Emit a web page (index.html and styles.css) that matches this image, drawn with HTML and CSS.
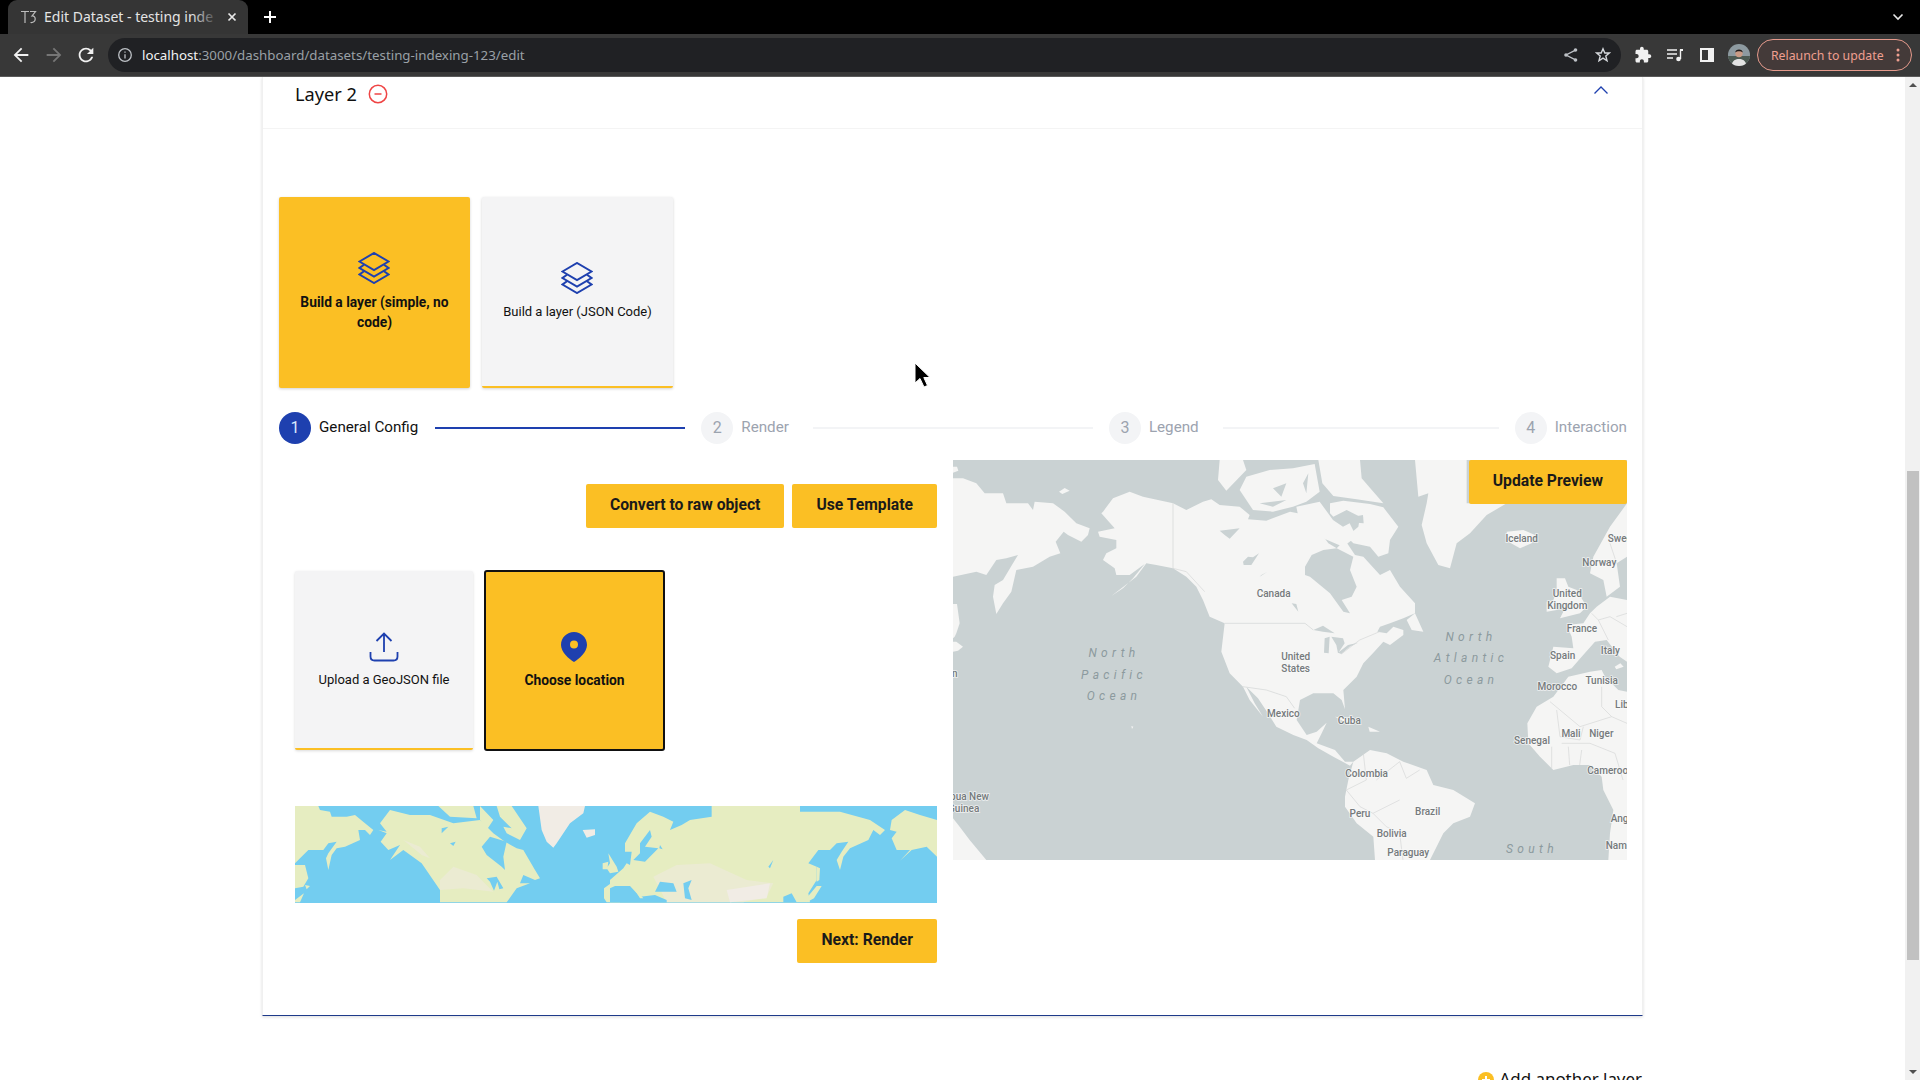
FILE: index.html
```html
<!DOCTYPE html>
<html lang="en">
<head>
<meta charset="utf-8">
<title>Edit Dataset - testing indexing</title>
<link rel="stylesheet" href="styles.css">
</head>
<body>
<header class="chrome">
  <div class="tabstrip">
    <div class="tab">
      <svg class="favicon" viewBox="0 0 17 16"><path d="M1 2.500H9M5 2.500V14M10 2.500H15.500L12 7C16.500 6.500 16.500 14 10.500 13.500"/></svg>
      <span class="tab-title">Edit Dataset - testing inde</span>
      <span class="tab-fade"></span>
      <svg class="tab-close" viewBox="0 0 10 10"><path d="M1.500 1.500L8.500 8.500M8.500 1.500L1.500 8.500"/></svg>
    </div>
    <svg class="newtab" viewBox="0 0 14 14"><path d="M7 1V13M1 7H13"/></svg>
    <svg class="tabmenu" viewBox="0 0 12 8"><path d="M1.500 1.500L6 6L10.500 1.500"/></svg>
  </div>
  <div class="toolbar">
    <svg class="tb-icon" viewBox="0 0 24 24"><path d="M20 11H7.830l5.590-5.590L12 4l-8 8 8 8 1.410-1.410L7.830 13H20v-2z"/></svg>
    <svg class="tb-icon tb-disabled" viewBox="0 0 24 24"><path d="M4 11h12.170l-5.590-5.590L12 4l8 8-8 8-1.410-1.410L16.170 13H4v-2z"/></svg>
    <svg class="tb-icon" viewBox="0 0 24 24"><path d="M17.650 6.350A7.958 7.958 0 0 0 12 4c-4.420 0-7.990 3.580-7.990 8s3.570 8 7.990 8c3.730 0 6.840-2.550 7.730-6h-2.080A5.990 5.990 0 0 1 12 18c-3.310 0-6-2.690-6-6s2.690-6 6-6c1.660 0 3.140.690 4.220 1.780L13 11h7V4l-2.350 2.350z"/></svg>
    <div class="omnibox">
      <svg class="info" viewBox="0 0 16 16"><circle cx="8" cy="8" r="6.300"/><path d="M8 7.200V11.500M8 4.500V5.800"/></svg>
      <span class="url"><span class="url-host">localhost</span>:3000/dashboard/datasets/testing-indexing-123/edit</span>
      <svg class="omni-icon share" viewBox="0 0 16 16"><circle cx="12.500" cy="3" r="1.800"/><circle cx="3" cy="8" r="1.800"/><circle cx="12.500" cy="13" r="1.800"/><path class="share-line" d="M12 3.300L3 8L12 12.700"/></svg>
      <svg class="omni-icon star" viewBox="0 0 16 16"><path d="M8 1.800L9.800 6H14.400L10.800 9L12 13.800L8 11.200L4 13.800L5.200 9L1.600 6H6.200Z"/></svg>
    </div>
    <svg class="ext-icon puzzle" viewBox="0 0 24 24"><path d="M20.500 11H19V7c0-1.100-.9-2-2-2h-4V3.500C13 2.120 11.880 1 10.500 1S8 2.120 8 3.500V5H4c-1.100 0-1.990.9-1.990 2v3.800H3.500c1.490 0 2.700 1.210 2.700 2.700s-1.210 2.700-2.700 2.700H2V20c0 1.100.9 2 2 2h3.800v-1.500c0-1.490 1.210-2.700 2.700-2.700 1.490 0 2.700 1.210 2.700 2.700V22H17c1.100 0 2-.9 2-2v-4h1.500c1.380 0 2.500-1.120 2.500-2.500S21.880 11 20.500 11z"/></svg>
    <svg class="ext-icon media" viewBox="0 0 16 14"><path class="media-line" d="M0 2H10M0 6H10M0 10H6M13.500 1.500V11"/><path class="media-flag" d="M13 1H16V3H13Z"/><circle cx="11.500" cy="11" r="2.300"/></svg>
    <svg class="ext-icon panel-ic" viewBox="0 0 14 14"><path d="M0 0H14V14H0ZM2 2V12H8V2Z"/></svg>
    <svg class="avatar" viewBox="0 0 22 22">
      <defs><clipPath id="av"><circle cx="11" cy="11" r="11"/></clipPath></defs>
      <g clip-path="url(#av)">
        <rect class="av-sky" width="22" height="22"/>
        <rect class="av-ground" y="12" width="22" height="10"/>
        <circle class="av-face" cx="11" cy="9.500" r="3.700"/>
        <path class="av-hair" d="M7.300 8.500C7 4.500 15 4.500 14.700 8.500C13 6.800 9 6.800 7.300 8.500Z"/>
        <path class="av-shirt" d="M3.500 22C4 16 8 15 11 15S18 16 18.500 22Z"/>
      </g>
    </svg>
    <div class="relaunch">
      <span class="relaunch-text">Relaunch to update</span>
      <svg class="relaunch-dots" viewBox="0 0 4 14"><circle cx="2" cy="2" r="1.500"/><circle cx="2" cy="7" r="1.500"/><circle cx="2" cy="12" r="1.500"/></svg>
    </div>
  </div>
</header>

<div class="viewport">
  <main class="page">
    <section class="panel">
      <div class="panel-head">
        <span class="layer-name">Layer 2</span>
        <svg class="remove" viewBox="0 0 20 20"><circle cx="10" cy="10" r="8.700"/><path d="M6.500 10H13.500"/></svg>
        <svg class="collapse" viewBox="0 0 14 8"><path d="M.5 7.500L7 1L13.500 7.500"/></svg>
      </div>
      <div class="panel-body">
        <div class="choice-row">
          <div class="choice choice-on">
            <svg class="layers" viewBox="0 0 32 32"><path d="M1.500 9.500L16 1L30.500 9.500L16 18Z"/><path d="M6 12.700L1.500 16L16 24.500L30.500 16L26 12.700"/><path d="M6 19.200L1.500 22.500L16 31L30.500 22.500L26 19.200"/></svg>
            <span>Build a layer (simple, no code)</span>
          </div>
          <div class="choice choice-off">
            <svg class="layers" viewBox="0 0 32 32"><path d="M1.500 9.500L16 1L30.500 9.500L16 18Z"/><path d="M6 12.700L1.500 16L16 24.500L30.500 16L26 12.700"/><path d="M6 19.200L1.500 22.500L16 31L30.500 22.500L26 19.200"/></svg>
            <span>Build a layer (JSON Code)</span>
          </div>
        </div>

        <ol class="stepper">
          <li class="step step-active"><span class="num">1</span><span class="step-label">General Config</span></li>
          <li class="rail rail-a"></li>
          <li class="step"><span class="num">2</span><span class="step-label">Render</span></li>
          <li class="rail rail-b"></li>
          <li class="step"><span class="num">3</span><span class="step-label">Legend</span></li>
          <li class="rail rail-c"></li>
          <li class="step"><span class="num">4</span><span class="step-label">Interaction</span></li>
        </ol>

        <div class="workspace">
          <div class="form-col">
            <div class="actions">
              <button class="btn">Convert to raw object</button>
              <button class="btn">Use Template</button>
            </div>
            <div class="source-row">
              <div class="source source-off">
                <svg class="upload" viewBox="0 0 30 30"><path d="M15 20V2M7.500 9L15 1.500L22.500 9M1.500 20V24.500C1.500 27 3 28.500 5.500 28.500H24.500C27 28.500 28.500 27 28.500 24.500V20"/></svg>
                <span>Upload a GeoJSON file</span>
              </div>
              <div class="source source-on">
                <svg class="pin" viewBox="0 0 26 30"><path fill-rule="evenodd" d="M13 0C6 0 0 5.500 0 13C0 20 8 27 13 30C18 27 26 20 26 13C26 5.500 20 0 13 0ZM13 8.500A4 4 0 1 1 13 16.500A4 4 0 1 1 13 8.500Z"/></svg>
                <span>Choose location</span>
              </div>
            </div>
            <svg class="mini-map" viewBox="0 0 1926 291">
              <rect class="mw" width="1926" height="291"/>
              <g transform="translate(-15,-18)">
                <path class="ml" d="M15 18H85L90 30L120 35L125 50L170 50L195 45L225 70L250 90L240 105L225 90L205 90L210 120L165 140L140 145L125 165L115 210L108 175L115 160L140 125L115 130L100 150L55 150L15 190Z"/>
                <path class="ml" d="M15 195H45L55 235L40 260L15 265ZM45 255L60 258L50 268ZM15 300L42 280L30 307H15Z"/>
                <path class="ml" d="M265 90L290 95L270 70L300 30L360 45L420 45L490 70L570 60L610 100L645 125L680 145L700 150L735 210L750 235L735 240L700 225L690 250L720 250L680 265L650 307H450V270L395 190L340 150L300 180L330 135L295 150L272 125L290 100Z"/>
                <path class="ml" d="M445 18H550L560 55L480 50ZM570 18L610 60L590 90L570 60ZM620 18H665L710 85L690 120L650 100L640 80L665 85L630 50Z"/>
                <path class="mp" d="M490 200L560 225L610 275L520 265L450 270V240ZM340 120L390 140L420 175L395 165Z"/>
                <path class="mw" d="M575 140L600 110L650 125L640 170L645 210L635 200L590 165ZM590 235L620 230L640 265L628 268L622 245L612 272L600 245ZM455 85L475 80L455 100ZM480 130L497 125L490 138Z"/>
                <path class="mg" d="M745 18H885L880 40L840 70L800 130L790 143L770 125L755 90Z"/>
                <path class="mg" d="M878 90L915 88L915 105L890 113Z"/>
                <path class="ml" d="M955 160L980 200L985 215L960 220L950 205L960 190ZM938 190L955 185L952 208L938 208ZM942 265L990 230V307H950L942 295Z"/>
              </g>
              <g transform="translate(945,-18)">
                <path class="ml" d="M45 130L80 70L120 35L160 50L190 65L180 90L215 75L240 60L305 50V18H570V35L690 35L780 60L825 90L810 105L790 90L775 120L720 145L700 170L690 210L680 180L695 155L715 125L680 130L660 150L625 150L595 190L620 200L620 240L595 280L600 307H0V240L40 205L50 190L60 195L65 155L45 155Z"/>
                <path class="ml" d="M620 200L630 205L628 240L620 245ZM620 258H635L612 295L590 307L585 300Z"/>
                <path class="ml" d="M845 60L885 30L930 45L981 60V170L950 140L905 150L870 182L900 150L860 150L845 115L860 95L840 90Z"/>
                <path class="mp" d="M130 230L200 195L300 190L410 240L490 250L470 290L400 307H170Z"/>
                <path class="mg" d="M350 270L480 250L470 295L360 307Z"/>
                <path class="mw" d="M90 130L120 90L125 110L105 140L145 145L105 185L70 180L90 160ZM135 275L150 245L190 250L200 275L160 275ZM220 250L245 240L235 265L245 300L225 295ZM15 258H60L90 290L135 285L170 300V307H0V265ZM475 200L490 180L480 205ZM520 290L545 280L560 307H520ZM150 135L158 148L148 145Z"/>
                <path class="ml" d="M65 255L100 295L90 295ZM0 240L18 238L8 262Z"/>
              </g>
            </svg>
            <div class="next-row"><button class="btn">Next: Render</button></div>
          </div>
          <div class="preview">
            <svg class="world" viewBox="0 0 2022 1200">
              <rect class="gw" width="2022" height="1200"/>
              <g class="gl">
                <path d="M0 55L30 55L70 70L95 100L150 100L160 130L225 130L240 150L245 125L300 130L335 155L370 190L410 205L405 225L385 245L345 225L332 215L308 245L322 280L290 290L240 320L190 330L175 395L150 430L130 462L120 410L125 375L150 360L180 310L195 285L160 295L130 300L110 330L100 345L70 335L0 350Z"/>
                <path d="M0 20H12L16 32L0 38ZM318 95L335 84L350 92L328 102ZM0 432H12L20 490L10 520L5 530L0 535ZM0 545H10L30 560L15 572L0 575Z"/>
                <path d="M0 1075L20 1100L50 1140L100 1200H0ZM535 798L541 800L537 807Z"/>
                <path d="M450 155L480 115L530 95L570 110L660 130L700 150L750 125L775 118L800 135L860 140L890 165L885 178L940 182L1011 155L1061 165L1101 215L1126 250L1151 265L1176 240L1206 285L1231 290L1281 345L1311 330L1341 380L1386 430L1386 460L1351 475L1311 490L1281 500L1273 515L1301 520L1321 500L1351 510L1351 525L1311 555L1291 545L1261 578L1231 610L1211 650L1171 690L1176 748L1166 720L1141 700L1081 700L1041 720L1031 780L1061 825L1091 815L1121 788L1106 820L1091 850L1146 870L1176 905L1201 905L1191 917L1141 890L1096 865L1061 840L1021 825L970 800L945 760L915 715L880 680L905 730L930 770L890 720L870 680L830 640L805 575L815 490L770 470L750 420L730 380L700 350L660 325L610 315L580 310L550 350L475 408L510 385L540 355L575 312L530 345L490 345L485 325L450 300L460 280L490 265L490 240L440 230L435 215L485 205L445 160Z"/>
                <path d="M800 0H870L880 30L820 92L795 60ZM860 90L880 50L950 30L1020 25L1085 12L1100 95L1060 125L1020 140L960 155L900 150ZM1096 0H1221L1226 55L1261 95L1291 130L1211 118L1141 108L1108 70ZM1131 130L1171 122L1251 132L1291 142L1336 200L1311 240L1306 280L1276 290L1251 260L1201 250L1181 230L1216 200L1221 170L1181 150L1141 170L1131 160ZM1030 140L1100 125L1140 180L1170 200L1190 190L1210 230L1170 260L1100 230L1040 190Z"/>
                <path d="M1386 0H1541V130H1661L1601 165L1551 220L1511 250L1491 325L1456 315L1421 250L1406 195L1421 130L1426 100L1396 110ZM1661 215L1711 210L1746 225L1736 250L1701 265L1666 245Z"/>
                <path d="M1361 480L1386 460L1411 515L1376 510ZM1146 770L1180 775L1216 790L1175 785ZM1246 800L1281 815L1250 815Z"/>
                <path d="M1811 355L1836 355L1846 380L1871 390L1901 440L1881 460L1821 475L1836 445L1801 420L1811 395ZM1781 425L1811 420L1811 450L1781 455Z"/>
                <path d="M2022 130L1971 200L1921 290L1911 340L1951 360L1961 410L2001 380L1991 310L2022 290Z"/>
                <path d="M2022 420L1971 410L1931 440L1911 460L1891 490L1841 495L1856 530L1861 565L1801 560L1786 620L1811 640L1856 625L1886 590L1926 545L1961 540L2000 590L2022 605ZM1985 620L2002 610L2012 620L1990 628Z"/>
                <path d="M1801 710L1846 650L1911 635L1946 630L1956 650L1996 690L2022 695V1200H1966L1971 1120L1981 1050L1951 990L1946 950L1911 915L1861 915L1801 930L1761 890L1726 850L1723 790L1751 740Z"/>
                <path d="M1176 1010L1186 960L1201 905L1251 870L1301 880L1351 905L1421 930L1441 975L1501 990L1566 1030L1551 1070L1501 1090L1471 1120L1431 1200H1266L1261 1130L1211 1090L1176 1040Z"/>
              </g>
              <g class="gw">
                <path d="M1056 320L1076 285L1111 270L1151 265L1201 290L1191 330L1211 380L1196 410L1166 420L1191 460L1171 455L1131 400L1071 350L1056 345Z"/>
                <path d="M800 212L860 205L830 236L815 225ZM870 305L885 290L900 292L918 280L895 315L872 315ZM920 350L942 336L925 345ZM1016 430L1030 432L1036 455L1024 440Z"/>
                <path d="M1081 510L1110 497L1145 520L1110 515ZM1115 535L1130 530L1127 580L1113 578ZM1135 530L1170 535L1175 550L1155 580L1150 555ZM1155 578L1185 555L1215 548L1190 560L1165 582Z"/>
                <path d="M1201 170L1230 165L1232 190L1210 188Z"/>
                <path d="M1050 70L1066 40L1060 100ZM960 85L1000 70L985 110ZM920 130L1000 120L960 140Z"/>
              </g>
              <path class="gb gb-main" d="M660 130V325M815 490H1056L1081 510M870 680L940 690L1000 710L1025 745"/>
              <path class="gb" d="M660 325L700 335L755 395M1165 582L1220 540L1280 515M1231 880L1240 960L1180 990L1221 1040L1260 1060L1300 1100L1340 1120L1350 1200M1270 960L1340 905M1340 905L1360 955L1400 930M1260 1060L1340 1020M1791 725L1881 800L1976 770L2022 790M1811 750L1821 830L1881 840L1891 800M1826 850L1911 850L1986 880L2010 960M1796 860L1796 925M1846 860L1850 915M1886 870L1880 915M1946 680L1946 740L1976 770M1966 540L1936 480L1971 470L2022 500M1916 460L1936 480M2022 460L1990 470M1991 310L1971 250"/>
              <g class="gt">
                <text x="962" y="410">Canada</text>
                <text x="1028" y="600">United</text>
                <text x="1028" y="636">States</text>
                <text x="991" y="772">Mexico</text>
                <text x="1189" y="792">Cuba</text>
                <text x="1241" y="950">Colombia</text>
                <text x="1221" y="1070">Peru</text>
                <text x="1424" y="1065">Brazil</text>
                <text x="1316" y="1130">Bolivia</text>
                <text x="1366" y="1188">Paraguay</text>
                <text x="1706" y="246">Iceland</text>
                <text x="1939" y="317">Norway</text>
                <text x="1843" y="412">United</text>
                <text x="1843" y="448">Kingdom</text>
                <text x="1887" y="517">France</text>
                <text x="1829" y="596">Spain</text>
                <text x="1972" y="582">Italy</text>
                <text x="1813" y="691">Morocco</text>
                <text x="1946" y="672">Tunisia</text>
                <text x="1854" y="832">Mali</text>
                <text x="1945" y="832">Niger</text>
                <text x="1737" y="852">Senegal</text>
                <text x="32" y="1020">Papua New</text>
                <text x="32" y="1057">Guinea</text>
                <text class="gt-start" x="1964" y="247">Sweden</text>
                <text class="gt-start" x="1986" y="743">Libya</text>
                <text class="gt-start" x="1903" y="942">Cameroon</text>
                <text class="gt-start" x="1973" y="1087">Angola</text>
                <text class="gt-start" x="1958" y="1168">Namibia</text>
                <text class="gt-end" x="14" y="650">Japan</text>
              </g>
              <g class="gs">
                <text x="483" y="592">North</text>
                <text x="483" y="656">Pacific</text>
                <text x="483" y="720">Ocean</text>
                <text x="1554" y="543">North</text>
                <text x="1554" y="607">Atlantic</text>
                <text x="1554" y="671">Ocean</text>
                <text x="1737" y="1178">South</text>
              </g>
            </svg>
            <button class="btn btn-float">Update Preview</button>
          </div>
        </div>
      </div>
    </section>
    <div class="add-row">
      <svg class="add-icon" viewBox="0 0 16 16"><circle class="add-disc" cx="8" cy="8" r="8"/><path class="add-plus" d="M8 4V12M4 8H12"/></svg>
      <span class="add-text">Add another layer</span>
    </div>
  </main>
  <aside class="scrollbar">
    <span class="sb-up"></span>
    <span class="sb-thumb"></span>
    <span class="sb-down"></span>
  </aside>
  <svg class="cursor" viewBox="0 0 17 27"><path d="M1 1V21L6 16.500L10 25L13.500 23.500L9.800 15.500H16Z"/></svg>
</div>
</body>
</html>
```

FILE: styles.css
```css
* { box-sizing: border-box; }
html, body { margin: 0; width: 1920px; height: 1080px; overflow: hidden; background: #fff; }
body { display: flex; flex-direction: column; font-family: Roboto, "Noto Sans", sans-serif; color: #111; }
svg { display: block; flex: none; }
button { font: inherit; border: 0; }

/* browser chrome */
.chrome { flex: none; height: 77px; display: flex; flex-direction: column; }
.tabstrip { height: 34px; background: #000; display: flex; align-items: flex-start; padding-left: 8px; position: relative; }
.tab { width: 240px; height: 34px; background: #353535; border-radius: 9px 9px 0 0; display: flex; align-items: center; padding: 0 0 0 12px; position: relative; }
.favicon { width: 17px; height: 16px; fill: none; stroke: #bdbdbd; stroke-width: 1.200; }
.tab-title { margin-left: 7px; padding-bottom: 2px; white-space: nowrap; font: 14px "Noto Sans", sans-serif; color: #e4e4e4; }
.tab-fade { position: absolute; left: 184px; top: 4px; width: 30px; height: 26px; background: linear-gradient(90deg, rgba(53,53,53,0), #353535 90%); }
.tab-close { position: absolute; left: 219px; top: 12px; width: 10px; height: 10px; fill: none; stroke: #e8e8e8; stroke-width: 1.700; }
.newtab { width: 14px; height: 14px; margin: 10px 0 0 15px; fill: none; stroke: #fff; stroke-width: 2; }
.tabmenu { width: 12px; height: 8px; margin: 13px 16px 0 auto; fill: none; stroke: #e8e8e8; stroke-width: 1.600; }
.toolbar { height: 43px; background: #383838; border-bottom: 1px solid #5a5a5a; display: flex; align-items: center; padding-left: 10px; }
.tb-icon { width: 22px; height: 22px; margin-right: 10.660px; fill: #f1f1f1; }
.tb-disabled { fill: #767676; }
.omnibox { width: 1513px; height: 34px; background: #202124; border-radius: 17px; display: flex; align-items: center; padding-left: 9px; padding-right: 10px; }
.info { width: 16px; height: 16px; fill: none; stroke: #bdc1c6; stroke-width: 1.300; }
.url { margin-left: 9px; font: 13.300px "Noto Sans", sans-serif; color: #9aa0a6; white-space: nowrap; }
.url-host { color: #f1f3f4; }
.omni-icon { width: 16px; height: 16px; }
.share { margin-left: auto; fill: #bdc1c6; }
.share-line { fill: none; stroke: #bdc1c6; stroke-width: 1.300; }
.star { margin-left: 16px; fill: none; stroke: #d5d8dc; stroke-width: 1.400; }
.ext-icon { fill: #f1f1f1; }
.puzzle { width: 18px; height: 18px; margin-left: 13px; }
.media { width: 16px; height: 14px; margin-left: 15px; }
.media-line { fill: none; stroke: #f1f1f1; stroke-width: 1.400; }
.panel-ic { width: 14px; height: 14px; margin-left: 17px; }
.avatar { width: 22px; height: 22px; margin-left: 14px; }
.av-sky { fill: #8d9aa0; }
.av-ground { fill: #4c5a52; }
.av-face { fill: #c99b85; }
.av-hair { fill: #1d1a1a; }
.av-shirt { fill: #e3e3e3; }
.relaunch { width: 155px; height: 32px; margin-left: 7px; border: 1px solid #e59a8c; border-radius: 16px; background: #443a39; display: flex; align-items: center; padding-left: 13px; }
.relaunch-text { font: 12.300px "Noto Sans", sans-serif; color: #ef9f90; white-space: nowrap; }
.relaunch-dots { width: 4px; height: 14px; margin-left: auto; margin-right: 11px; fill: #ef9f90; }

/* page */
.viewport { flex: 1; display: flex; min-height: 0; position: relative; }
.page { width: 1905px; padding-left: 262px; overflow: hidden; }
.panel { width: 1381px; border-left: 1px solid #f0f0f0; border-right: 1px solid #f0f0f0; border-bottom: 1px solid #1e3a8a; box-shadow: 0 1px 3px rgba(0,0,0,.14); }
.panel-head { height: 52px; border-bottom: 1px solid #f4f4f4; display: flex; align-items: flex-start; padding: 4px 34px 0 32px; }
.layer-name { font: 18.200px/26px "Noto Sans", sans-serif; color: #111; }
.remove { width: 20px; height: 20px; margin: 3px 0 0 11px; fill: none; stroke: #ef4444; stroke-width: 1.500; }
.collapse { width: 14px; height: 8px; margin: 5px 0 0 auto; fill: none; stroke: #1e40af; stroke-width: 1.300; }
.panel-body { padding: 68px 15px 52px 16px; }

.choice-row { display: flex; gap: 12px; }
.choice { width: 191px; height: 191px; border-radius: 2px; display: flex; flex-direction: column; align-items: center; justify-content: center; gap: 8px; padding: 0 8px; font-size: 13px; line-height: 20px; text-align: center; box-shadow: 0 1px 3px rgba(0,0,0,.18); }
.choice-on { background: #fbbf24; font-weight: 700; font-size: 13.800px; padding-bottom: 2px; }
.choice-off { background: #f4f4f5; border-bottom: 2px solid #fbbf24; }
.layers { width: 32px; height: 32px; margin-right: 1px; fill: none; stroke: #1e40af; stroke-width: 2; }

.stepper { list-style: none; margin: 24px 0 0; padding: 0; display: flex; align-items: center; height: 32px; }
.step { flex: none; white-space: nowrap; display: flex; align-items: center; gap: 8px; font-size: 15.200px; color: #9ca3af; }
.step-label { padding-bottom: 2px; }
.num { flex: none; width: 32px; height: 32px; border-radius: 50%; background: #f3f4f6; display: flex; align-items: center; justify-content: center; font-size: 16px; padding-bottom: 2px; }
.step-active { color: #111; }
.step-active .num { background: #1e40af; color: #dbeafe; }
.rail { height: 2px; background: #f3f4f6; margin: 0 16px 0 24px; flex: none; }
.rail-a { width: 250px; margin-left: 17px; background: #1e40af; }
.rail-b { width: 280px; }
.rail-c { width: 276px; }

.workspace { display: flex; gap: 16px; margin-top: 16px; align-items: flex-start; }
.form-col { width: 658px; padding: 24px 0 0 16px; }
.actions { display: flex; justify-content: flex-end; gap: 8px; }
.btn { height: 44px; padding: 0 24px 3px; background: #fbbf24; color: #1a1a1a; border-radius: 2px; font: 700 15.700px Roboto, sans-serif; white-space: nowrap; }
.source-row { display: flex; gap: 11px; margin-top: 42px; align-items: center; }
.source { display: flex; flex-direction: column; align-items: center; justify-content: center; gap: 8px; font-size: 13px; line-height: 20px; border-radius: 2px; }
.source-off { width: 178px; height: 179px; padding-top: 2px; background: #f4f4f5; border-bottom: 2px solid #fbbf24; box-shadow: 0 1px 3px rgba(0,0,0,.15); }
.source-on { width: 181px; height: 181px; background: #fbbf24; border: 2px solid #111; font-weight: 700; font-size: 13.800px; border-radius: 3px; }
.upload { width: 30px; height: 30px; fill: none; stroke: #1e40af; stroke-width: 1.800; }
.pin { width: 26px; height: 30px; margin-right: 1px; fill: #1e40af; }
.mini-map { width: 642px; height: 97px; margin-top: 55px; }
.mw { fill: #73cdf0; }
.ml { fill: #e6edc1; }
.mp { fill: #ebebd2; }
.mg { fill: #f1ece5; }
.next-row { display: flex; justify-content: flex-end; margin-top: 16px; }

.preview { position: relative; width: 674px; height: 400px; overflow: hidden; }
.world { width: 674px; height: 400px; }
.gw { fill: #cad2d3; }
.gl { fill: #f5f5f4; }
.gb { fill: none; stroke: #d4d6d6; stroke-width: 2; }
.gb-main { stroke: #d9dbdb; stroke-width: 2.500; }
.gt { font: 500 30px Roboto, sans-serif; fill: #757a7c; text-anchor: middle; paint-order: stroke; stroke: rgba(250,250,250,.75); stroke-width: 5; }
.gt-start { text-anchor: start; }
.gt-end { text-anchor: end; }
.gs { font: italic 400 36px Roboto, sans-serif; fill: #8c9a9e; text-anchor: middle; letter-spacing: 13px; }
.btn-float { position: absolute; top: 0; right: 0; }

.add-row { display: flex; justify-content: flex-end; align-items: flex-start; gap: 6px; width: 1380px; margin-top: 50px; }
.add-icon { width: 16px; height: 16px; margin-top: 6px; }
.add-disc { fill: #fbbf24; }
.add-plus { fill: none; stroke: #fff; stroke-width: 2; }
.add-text { font: 16.900px/26px "Noto Sans", sans-serif; color: #111; white-space: nowrap; }

/* scrollbar */
.scrollbar { width: 15px; background: #f1f1f1; position: relative; }
.sb-thumb { position: absolute; left: 2px; right: 1px; top: 394px; height: 489px; background: #c1c1c1; }
.sb-up { position: absolute; left: 4px; top: 6px; border: 4px solid transparent; border-top: 0; border-bottom: 4px solid #505050; }
.sb-down { position: absolute; left: 4px; bottom: 6px; border: 4px solid transparent; border-bottom: 0; border-top: 4px solid #505050; }

.cursor { position: absolute; left: 914px; top: 285px; width: 17px; height: 27px; fill: #000; stroke: #fff; stroke-width: 1; }
```
